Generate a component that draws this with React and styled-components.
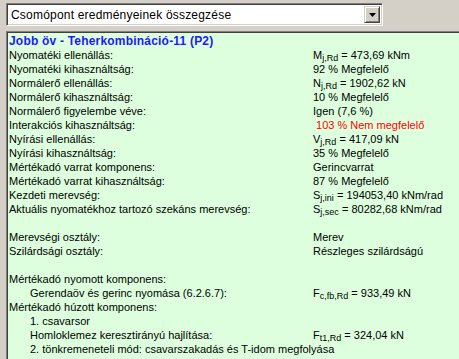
import React from "react";
import styled, { createGlobalStyle } from "styled-components";

const Global = createGlobalStyle`
  html, body { margin: 0; padding: 0; }
  body {
    background: #d4d0c8;
    width: 459px;
    height: 359px;
    overflow: hidden;
    font-family: "Liberation Sans", Arial, sans-serif;
    font-size: 11px;
    color: #000;
  }
`;

const Page = styled.div`
  display: flex;
  flex-direction: column;
  gap: 5px;
  padding: 3px 0 0 6px;
  height: 359px;
  box-sizing: border-box;
`;

const Combo = styled.div`
  width: 377px;
  height: 23px;
  box-sizing: border-box;
  background: #fff;
  border-top: 1px solid #808080;
  border-left: 1px solid #808080;
  border-right: 1px solid #fff;
  border-bottom: 1px solid #fff;
  box-shadow: inset 1px 1px 0 #404040, inset -1px -1px 0 #d4d0c8;
  display: flex;
  align-items: center;
  padding: 2px 2px 2px 4px;
`;

const ComboText = styled.span`
  flex: 1;
  font-size: 12px;
  letter-spacing: 0.2px;
`;

const DropButton = styled.div`
  width: 16px;
  height: 17px;
  box-sizing: border-box;
  background: #d4d0c8;
  border-top: 1px solid #d4d0c8;
  border-left: 1px solid #d4d0c8;
  border-right: 1px solid #404040;
  border-bottom: 1px solid #404040;
  box-shadow: inset 1px 1px 0 #fff, inset -1px -1px 0 #808080;
  display: flex;
  align-items: center;
  justify-content: center;
`;

const Panel = styled.div`
  flex: 1;
  background: #ddffdd;
  border-top: 1px solid #808080;
  border-left: 1px solid #808080;
  box-shadow: inset 1px 1px 0 #404040;
  padding: 3px 0 0 2px;
  overflow: hidden;
`;

const Title = styled.div`
  font-weight: bold;
  color: #1a1aff;
  line-height: 13px;
  font-size: 12px;
  letter-spacing: 0.2px;
  white-space: nowrap;
`;

const Row = styled.div`
  display: flex;
  line-height: 14px;
  height: 14px;
  white-space: nowrap;
`;

const Label = styled.div`
  width: ${(p) => (p.$full ? "auto" : "304px")};
  flex: none;
  padding-left: ${(p) => (p.$indent ? "21px" : "0")};
  box-sizing: border-box;
`;

const Value = styled.div`
  color: ${(p) => (p.$bad ? "#ff0000" : "#000")};
  white-space: pre;
`;

const Sub = styled.span`
  font-size: 9px;
  vertical-align: -2px;
  line-height: 0;
`;

const rows = [
  { l: "Nyomatéki ellenállás:", v: <>M<Sub>j,Rd</Sub> = 473,69 kNm</> },
  { l: "Nyomatéki kihasználtság:", v: "92 % Megfelelő" },
  { l: "Normálerő ellenállás:", v: <>N<Sub>j,Rd</Sub> = 1902,62 kN</> },
  { l: "Normálerő kihasználtság:", v: "10 % Megfelelő" },
  { l: "Normálerő figyelembe véve:", v: "Igen (7,6 %)" },
  { l: "Interakciós kihasználtság:", v: " 103 % Nem megfelelő", bad: true },
  { l: "Nyírási ellenállás:", v: <>V<Sub>j,Rd</Sub> = 417,09 kN</> },
  { l: "Nyírási kihasználtság:", v: "35 % Megfelelő" },
  { l: "Mértékadó varrat komponens:", v: "Gerincvarrat" },
  { l: "Mértékadó varrat kihasználtság:", v: "87 % Megfelelő" },
  { l: "Kezdeti merevség:", v: <>S<Sub>j,ini</Sub> = 194053,40 kNm/rad</> },
  { l: "Aktuális nyomatékhoz tartozó szekáns merevség:", v: <>S<Sub>j,sec</Sub> = 80282,68 kNm/rad</> },
  { l: "", v: "" },
  { l: "Merevségi osztály:", v: "Merev" },
  { l: "Szilárdsági osztály:", v: "Részleges szilárdságú" },
  { l: "", v: "" },
  { l: "Mértékadó nyomott komponens:", full: true },
  { l: "Gerendaöv és gerinc nyomása (6.2.6.7):", indent: true, v: <>F<Sub>c,fb,Rd</Sub> = 933,49 kN</> },
  { l: "Mértékadó húzott komponens:", full: true },
  { l: "1. csavarsor", indent: true, full: true },
  { l: "Homloklemez keresztirányú hajlítása:", indent: true, v: <>F<Sub>t1,Rd</Sub> = 324,04 kN</> },
  { l: "2. tönkremeneteli mód: csavarszakadás és T-idom megfolyása", indent: true, full: true },
];

export default function App() {
  return (
    <>
      <Global />
      <Page>
        <Combo>
          <ComboText>Csomópont eredményeinek összegzése</ComboText>
          <DropButton>
            <svg width="7" height="4" viewBox="0 0 7 4">
              <path d="M0 0h7L3.5 4z" fill="#000" />
            </svg>
          </DropButton>
        </Combo>
        <Panel>
          <Title>Jobb öv - Teherkombináció-11 (P2)</Title>
          {rows.map((r, i) => (
            <Row key={i}>
              <Label $full={r.full} $indent={r.indent}>{r.l}</Label>
              {!r.full && <Value $bad={r.bad}>{r.v}</Value>}
            </Row>
          ))}
        </Panel>
      </Page>
    </>
  );
}
